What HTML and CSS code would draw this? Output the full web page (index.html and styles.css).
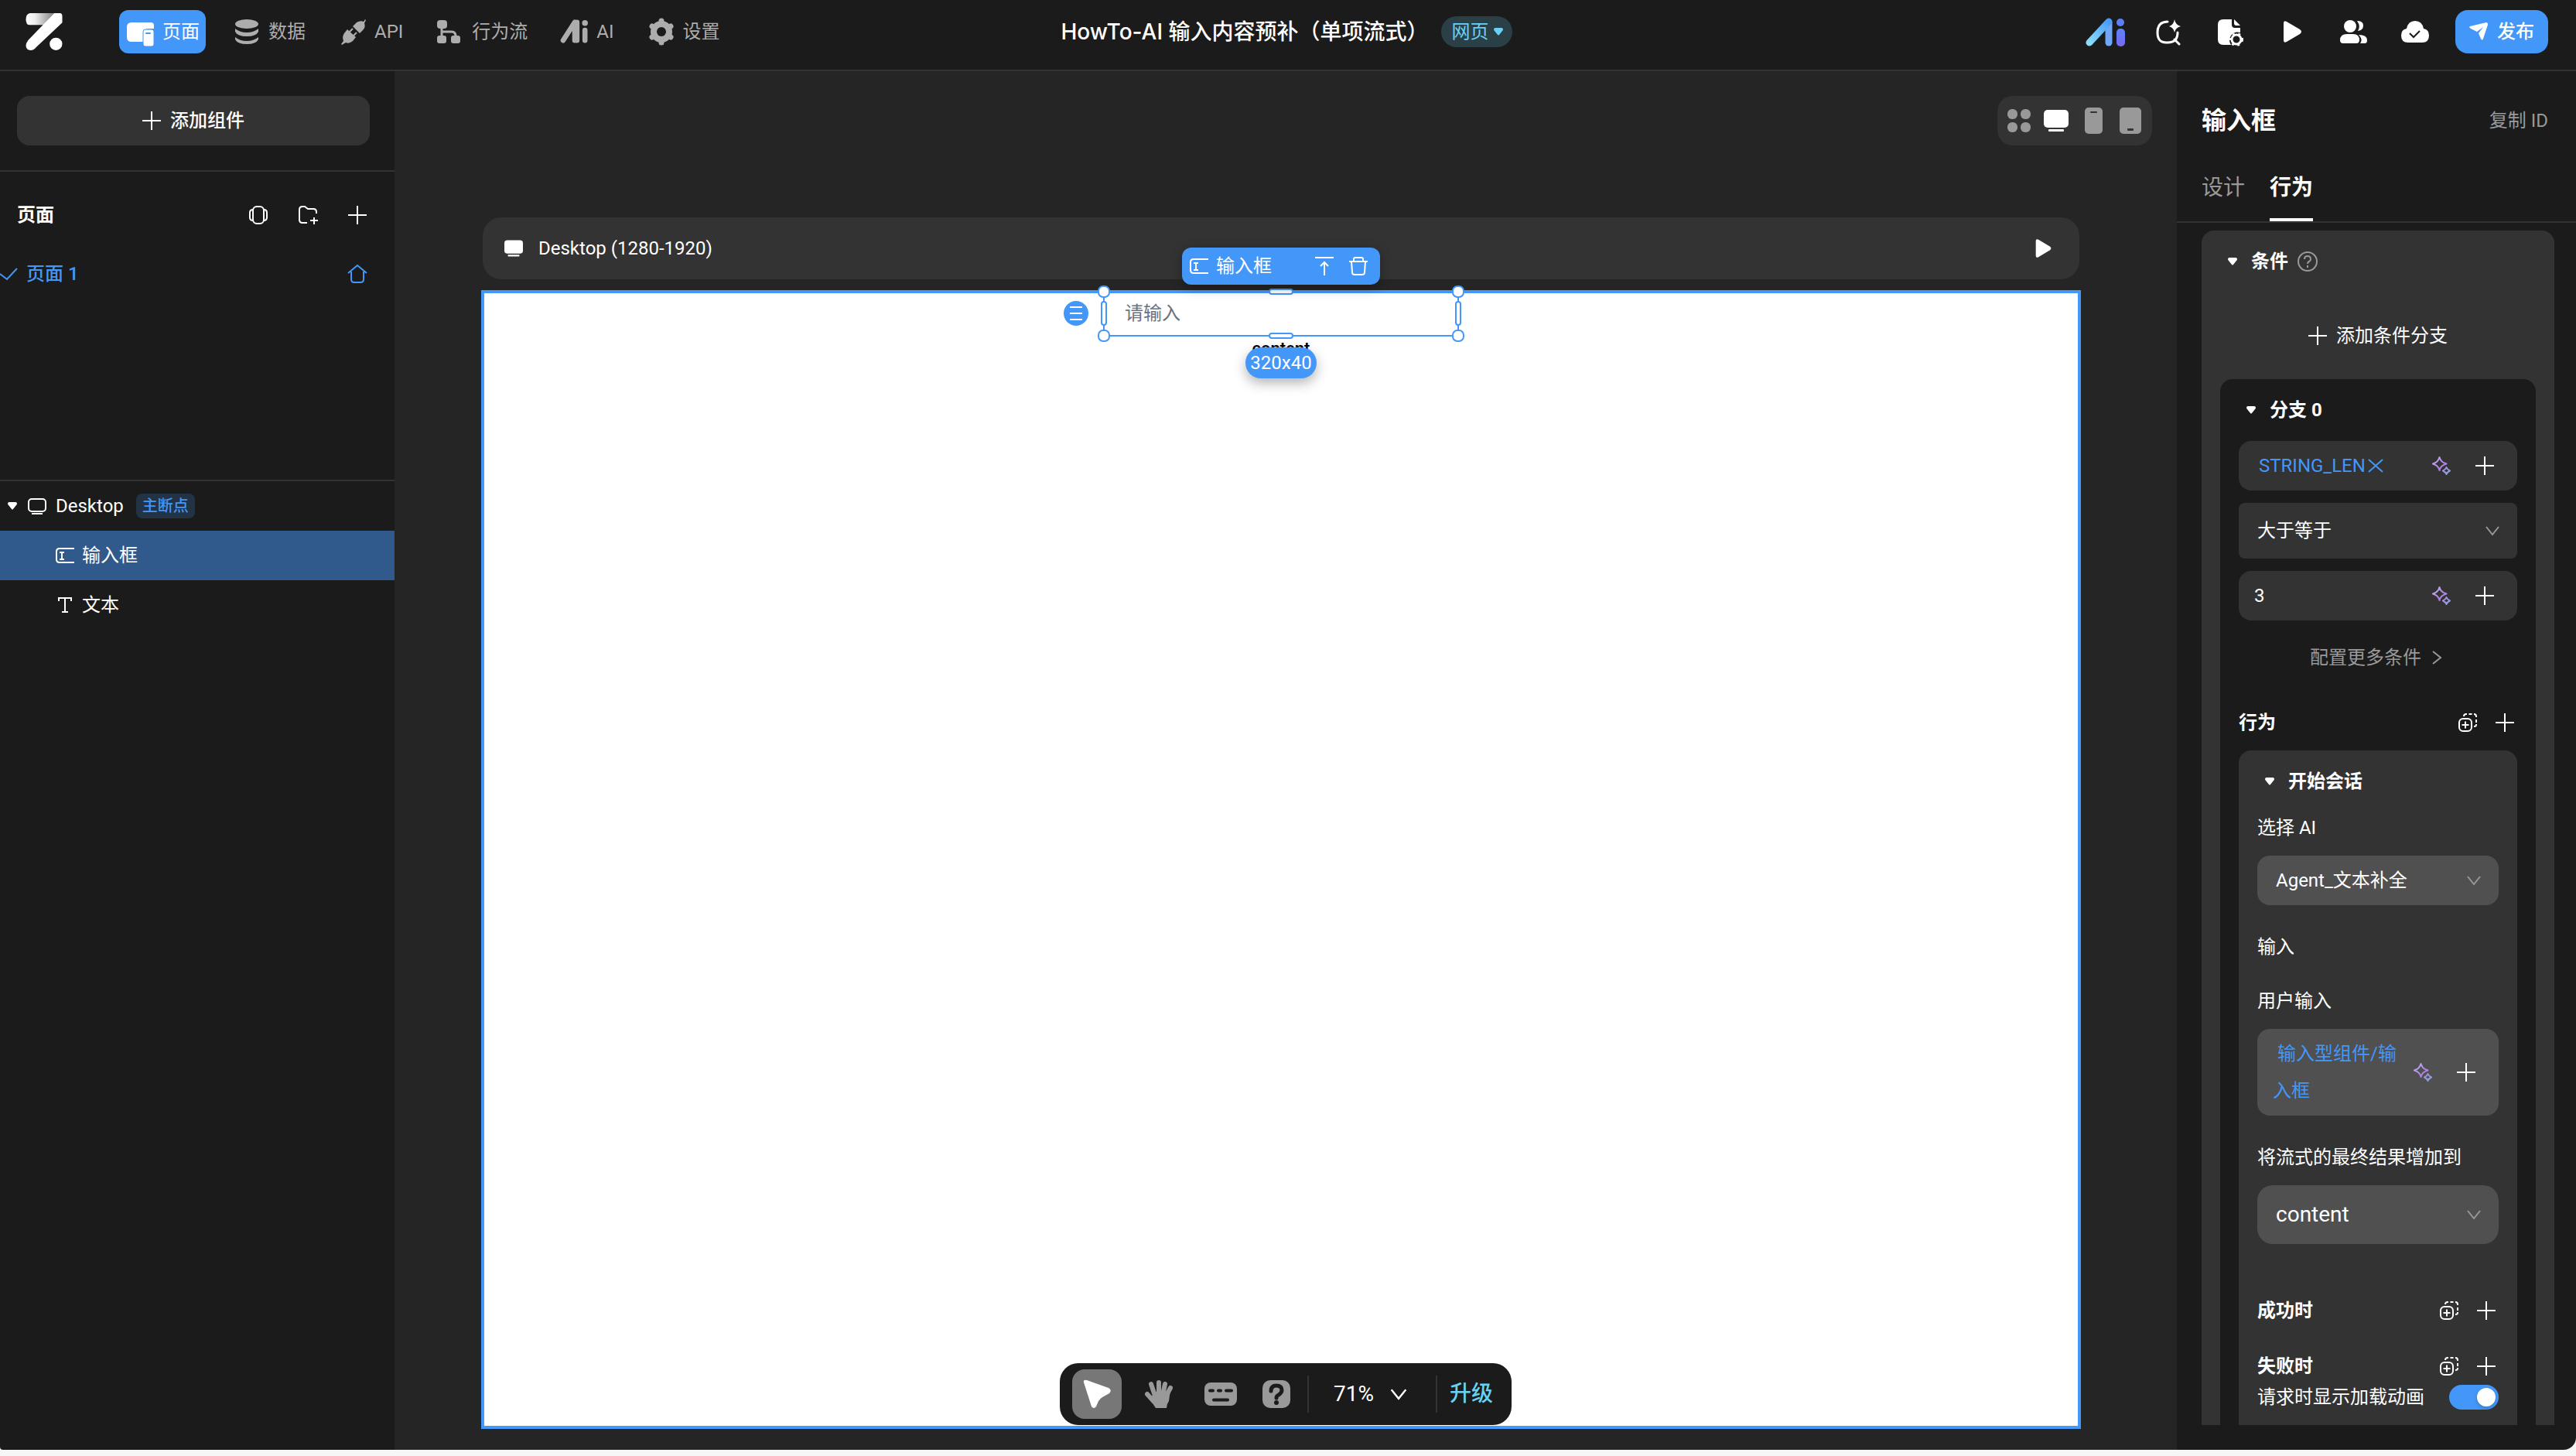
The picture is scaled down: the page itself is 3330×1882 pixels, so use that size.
FILE: index.html
```html
<!DOCTYPE html>
<html lang="zh-CN">
  <head>
    <meta charset="UTF-8" />
    <meta name="viewport" content="width=device-width, initial-scale=1.0" />
    <title>HowTo-AI 输入内容预补（单项流式）</title>
    <link rel="stylesheet" href="styles.css">
  </head>
  <body>
    <!-- Shared icons -->
    <svg class="sprite" aria-hidden="true">
      <defs>
        <linearGradient id="logo-fold" x1="0" x2="1">
          <stop offset="0" stop-color="#fff" />
          <stop offset="0.3" stop-color="#eee" />
          <stop offset="1" stop-color="#777" />
        </linearGradient>
        <linearGradient id="ai-left" x1="0" y1="1" x2="1" y2="0">
          <stop offset="0" stop-color="#8adcf8" />
          <stop offset="1" stop-color="#4a9cf8" />
        </linearGradient>
        <linearGradient id="ai-right" x1="0" y1="0" x2="0" y2="1">
          <stop offset="0" stop-color="#5b83fa" />
          <stop offset="1" stop-color="#7a68f0" />
        </linearGradient>
        <linearGradient id="spark" x1="0" y1="0" x2="1" y2="1">
          <stop offset="0" stop-color="#bfb4f2" />
          <stop offset="0.5" stop-color="#b07fe0" />
          <stop offset="1" stop-color="#86a4f0" />
        </linearGradient>
      </defs>
      <symbol id="plus" viewBox="0 0 24 24">
        <path d="M12 0v24M0 12h24" stroke="currentColor" stroke-width="2" />
      </symbol>
      <symbol id="caret" viewBox="0 0 12 10">
        <path d="M2 0h8q2 0 2 2 0 1-1 2L7 9q-1 1-2 0L1 4Q0 3 0 2 0 0 2 0z" fill="currentColor" />
      </symbol>
      <symbol id="chevron" viewBox="0 0 24 24">
        <path d="M4 7l8 10 8-10" fill="none" stroke="currentColor" stroke-width="2" />
      </symbol>
      <symbol id="sparkle" viewBox="0 0 24 24">
        <path d="M9.500 1Q11 7.500 18.500 9.500 11 11.500 9.500 18 8 11.500 1 9.500 8 7.500 9.500 1zM18.500 14Q19.500 17 23 18.500 19.500 20 18.500 23 17.500 20 14 18.500 17.500 17 18.500 14z" fill="none" stroke="url(#spark)" stroke-width="2" stroke-linejoin="round" />
      </symbol>
      <symbol id="paste-add" viewBox="0 0 24 24">
        <g fill="none" stroke="currentColor" stroke-width="2">
          <rect x="1" y="7" width="16" height="16" rx="5" />
          <path d="M9 10.500v9M4.500 15h9" />
          <path d="M7 4Q7 1 10 1h1M13.500 1h4M20 1q3 0 3 3v1M23 8v4M23 14v1q0 2-3 2" />
        </g>
      </symbol>
      <symbol id="play" viewBox="0 0 24 28">
        <path d="M0 3Q0-1 4 1l17 10q4 3 0 6L4 27q-4 2-4-2z" fill="currentColor" />
      </symbol>
      <symbol id="monitor" viewBox="0 0 32 28">
        <rect width="32" height="23" rx="5" fill="currentColor" />
        <rect x="6" y="25" width="20" height="3" rx="1" fill="currentColor" />
      </symbol>
      <symbol id="input-icon" viewBox="0 0 24 24">
        <path d="M24 3H5Q1 3 1 7v10q0 4 4 4h19M5 8h6M8 8v9M5 17h6" fill="none" stroke="currentColor" stroke-width="2" />
      </symbol>
      <symbol id="ai-mono" viewBox="0 0 40 34">
        <path d="M4 29L20 4v25" fill="none" stroke="currentColor" stroke-width="7" stroke-linecap="round" stroke-linejoin="round" />
        <path d="M23 4v25M34 15v14" stroke="currentColor" stroke-width="7" stroke-linecap="round" />
        <circle cx="34" cy="5" r="4" fill="currentColor" />
      </symbol>
    </svg>

    <div class="app">
      <header class="topbar">
        <div class="topbar-left">
          <svg class="logo" viewBox="0 0 46 47">
            <path d="M5 0h33L23 15H5Q0 15 0 8T5 0z" fill="url(#logo-fold)" />
            <path d="M36 0h7q3 0 3 4v8L13 43q-3 4-7 4-6 0-6-6 0-3 3-7z" fill="#fff" />
            <circle cx="38" cy="39" r="8" fill="#fff" />
          </svg>
          <nav class="main-nav">
            <button class="nav-item active">
              <svg viewBox="0 0 40 40">
                <path d="M8 8h25q4 0 4 4v4h-7q-6 0-6 6v11H8q-6 0-6-6V14q0-6 6-6z" fill="#fff" />
                <rect x="23" y="17" width="14" height="22" rx="3" fill="#fff" stroke="#4397f8" />
                <rect x="26" y="21" width="7" height="2" rx="1" fill="#4397f8" />
              </svg>
              <span>页面</span>
            </button>
            <button class="nav-item">
              <svg viewBox="0 0 40 40" fill="currentColor">
                <ellipse cx="20" cy="10" rx="15" ry="6" />
                <path d="M5 16q6 5 15 5t15-5v4q-3 6-15 6T5 20zM5 27q6 5 15 5t15-5v3q-3 6-15 6T5 30z" />
              </svg>
              <span>数据</span>
            </button>
            <button class="nav-item">
              <svg viewBox="0 0 40 40" fill="currentColor">
                <path d="M20 13l5-5q5-3 9-1l2-3 1 1-2 4q2 5-2 9l-4 4z" />
                <path d="M13 17l11 10-4 5q-5 4-9 2l-5 3-1-1 3-4q-2-6 1-10z" />
                <path d="M15 21l5-5M20 26l5-5" stroke="currentColor" stroke-width="2" />
              </svg>
              <span>API</span>
            </button>
            <button class="nav-item">
              <svg viewBox="0 0 40 40" fill="currentColor">
                <rect x="3" y="5" width="13" height="11" rx="4" />
                <rect x="3" y="25" width="12" height="10" rx="3" />
                <rect x="21" y="25" width="12" height="10" rx="3" />
                <path d="M9 15v11M9 20h13q5 0 5 6" fill="none" stroke="currentColor" stroke-width="3" />
              </svg>
              <span>行为流</span>
            </button>
            <button class="nav-item">
              <svg class="ai-small" viewBox="0 0 40 34"><use href="#ai-mono" /></svg>
              <span>AI</span>
            </button>
            <button class="nav-item">
              <svg viewBox="0 0 40 40">
                <circle cx="20" cy="20" r="10" fill="none" stroke="currentColor" stroke-width="8" />
                <path d="M20 6v6M20 28v6M8 13l5 3M27 24l5 3M8 27l5-3M27 16l5-3" stroke="currentColor" stroke-width="7" stroke-linecap="round" />
                <circle cx="20" cy="20" r="6" fill="#1b1b1b" />
              </svg>
              <span>设置</span>
            </button>
          </nav>
        </div>

        <div class="project">
          <h1>HowTo-AI 输入内容预补（单项流式）</h1>
          <button class="platform">网页 <svg><use href="#caret" /></svg></button>
        </div>

        <div class="topbar-right">
          <button class="icon-btn" aria-label="AI">
            <svg viewBox="0 0 40 40">
              <path d="M24 8v26" stroke="#6fa6f5" stroke-width="9" stroke-linecap="round" />
              <path d="M-1 34L24 7" stroke="url(#ai-left)" stroke-width="9" stroke-linecap="round" />
              <rect x="34" y="16" width="11" height="23" rx="5" fill="url(#ai-right)" />
              <circle cx="39" cy="8" r="5" fill="#5f7ffa" />
            </svg>
          </button>
          <button class="icon-btn" aria-label="搜索">
            <svg viewBox="0 0 40 40">
              <path d="M20 7Q7 7 7 21t13 13q13 0 13-13M29 30l6 6" fill="none" stroke="#fff" stroke-width="3" stroke-linecap="round" />
              <path d="M29 4q1 7 8 9-7 2-8 8-1-6-7-8 6-2 7-9z" fill="#fff" />
            </svg>
          </button>
          <button class="icon-btn" aria-label="页面配置">
            <svg viewBox="0 0 40 40">
              <path d="M12 4h11v7q0 4 4 4h7v6q-8-2-12 4-4 6 0 12H12q-7 0-7-7V11q0-7 7-7z" fill="#fff" />
              <path d="M26 4l8 8h-5q-3 0-3-3z" fill="#fff" />
              <circle cx="29" cy="30" r="6" fill="none" stroke="#fff" stroke-width="3" />
              <circle cx="29" cy="30" r="8" fill="none" stroke="#fff" stroke-width="2" stroke-dasharray="3 5" />
            </svg>
          </button>
          <button class="icon-btn" aria-label="预览">
            <svg class="play-big" viewBox="0 0 24 28"><use href="#play" /></svg>
          </button>
          <button class="icon-btn" aria-label="成员">
            <svg viewBox="0 0 40 40" fill="#fff">
              <circle cx="16" cy="13" r="8" />
              <path d="M25 6q8 0 8 6t-7 7q4-6-1-13z" />
              <path d="M12 23h8q8 0 8 8 0 4-4 4H7q-4 0-4-4 0-8 9-8zM27 24q11 0 11 7 0 4-3 4h-6q4-5-2-11z" />
            </svg>
          </button>
          <button class="icon-btn" aria-label="已保存">
            <svg viewBox="0 0 40 40">
              <path d="M11 34q-9 0-9-9 0-8 7-9Q11 6 20 6t11 10q7 1 7 9 0 9-9 9z" fill="#fff" />
              <path d="M13 22l5 5 8-8" fill="none" stroke="#1b1b1b" stroke-width="2" />
            </svg>
          </button>
          <button class="publish">
            <svg viewBox="0 0 24 24">
              <path d="M22 0q2 0 2 3l-6 18q-1 3-3 0l-3-7 6-8-8 6-8-4Q-1 6 1 5z" fill="#fff" />
            </svg>
            <span>发布</span>
          </button>
        </div>
      </header>

      <aside class="sidebar">
        <div class="add-box">
          <button class="add-component"><svg><use href="#plus" /></svg>添加组件</button>
        </div>
        <section class="pages">
          <div class="pages-head">
            <h2>页面</h2>
            <button aria-label="弹窗">
              <svg viewBox="0 0 24 24" fill="none" stroke="currentColor" stroke-width="2">
                <rect x="5" y="1" width="14" height="22" rx="5" />
                <path d="M5 5Q1 5 1 9v6q0 4 4 4M19 5q4 0 4 4v6q0 4-4 4" />
              </svg>
            </button>
            <button aria-label="新建文件夹">
              <svg viewBox="0 0 24 24" fill="none" stroke="currentColor" stroke-width="2">
                <path d="M11 22H5q-4 0-4-4V5q0-4 4-4h3l4 3h7q4 0 4 4v2M20 15v9M15 19h10" />
              </svg>
            </button>
            <button aria-label="新建页面"><svg><use href="#plus" /></svg></button>
          </div>
          <a class="page-item" href="#">
            <svg class="page-check" viewBox="0 0 24 24"><path d="M0 12l9 7L22 5" /></svg>
            <span>页面 1</span>
            <svg class="page-home" viewBox="0 0 24 24"><path d="M0 11L12 1l12 10M4 9v10q0 4 4 4h8q4 0 4-4V9" /></svg>
          </a>
        </section>
        <section class="tree">
          <div class="tree-row">
            <svg class="caret"><use href="#caret" /></svg>
            <svg class="tree-screen" viewBox="0 0 24 24" fill="none" stroke="currentColor" stroke-width="2">
              <rect x="1" y="3" width="22" height="16" rx="4" />
              <path d="M5 22h14" />
            </svg>
            <span>Desktop</span>
            <span class="tag">主断点</span>
          </div>
          <div class="tree-row child selected">
            <svg><use href="#input-icon" /></svg>
            <span>输入框</span>
          </div>
          <div class="tree-row child">
            <svg viewBox="0 0 24 24" fill="none" stroke="currentColor" stroke-width="2">
              <path d="M4 7V3h16v4M12 3v18M8 21h8" />
            </svg>
            <span>文本</span>
          </div>
        </section>
      </aside>

      <main class="workspace">
        <div class="devices">
          <button aria-label="全部">
            <svg viewBox="0 0 32 32" fill="currentColor">
              <rect x="1" y="1" width="13" height="13" rx="6" /><rect x="18" y="1" width="13" height="13" rx="6" />
              <rect x="1" y="18" width="13" height="13" rx="6" /><rect x="18" y="18" width="13" height="13" rx="6" />
            </svg>
          </button>
          <button class="active" aria-label="桌面"><svg><use href="#monitor" /></svg></button>
          <button aria-label="手机">
            <svg viewBox="0 0 32 34">
              <rect x="5" width="23" height="34" rx="5" fill="currentColor" />
              <rect x="12" y="5" width="9" height="2" rx="1" fill="#333" />
            </svg>
          </button>
          <button aria-label="平板">
            <svg viewBox="0 0 32 34">
              <rect x="2" width="28" height="34" rx="5" fill="currentColor" />
              <rect x="12" y="27" width="8" height="3" rx="1" fill="#333" />
            </svg>
          </button>
        </div>

        <div class="frame-head">
          <svg><use href="#monitor" /></svg>
          <span>Desktop (1280-1920)</span>
          <button aria-label="运行"><svg><use href="#play" /></svg></button>
        </div>

        <div class="frame">
          <div class="widget">
            <input type="text" placeholder="请输入" aria-label="输入框" />
            <i class="corner top left"></i>
            <i class="corner top right"></i>
            <i class="corner bottom left"></i>
            <i class="corner bottom right"></i>
            <i class="edge top"></i>
            <i class="edge bottom"></i>
            <i class="side left"></i>
            <i class="side right"></i>
            <button class="drag" aria-label="菜单">
              <svg viewBox="0 0 16 18"><path d="M0 1h16M0 9h16M0 17h16" stroke="#fff" stroke-width="2" /></svg>
            </button>
            <div class="widget-bar">
              <svg><use href="#input-icon" /></svg>
              <span>输入框</span>
              <button aria-label="上移">
                <svg viewBox="0 0 24 24" fill="none" stroke="#fff" stroke-width="2"><path d="M0 1h24M12 24V7M7 12l5-5 5 5" /></svg>
              </button>
              <button aria-label="删除">
                <svg viewBox="0 0 24 24" fill="none" stroke="#fff" stroke-width="2">
                  <path d="M0 6h24M3 6l1 14q0 3 3 3h10q3 0 3-3l1-14M6 6V3q0-2 2-2h8q2 0 2 2v3" />
                </svg>
              </button>
            </div>
            <div class="widget-size">320x40</div>
          </div>
          <p class="frame-text">content</p>
        </div>

        <div class="tools">
          <button class="tool active" aria-label="选择">
            <svg viewBox="0 0 36 36"><path d="M1 3Q0-1 5 0l28 10q5 3 1 7l-9 5q-3 2-5 5l-3 7q-3 4-6 0z" fill="#fff" /></svg>
          </button>
          <button class="tool" aria-label="拖动">
            <svg viewBox="0 0 36 36">
              <path d="M11 27L3 18M13 20L8 5M18 19V3M23 19l3-14M26 23l7-13" stroke="currentColor" stroke-width="6" stroke-linecap="round" />
              <path d="M2 19l8 11 4 6h14q0-5 3-9l2-14-9 2H12l-3 6z" fill="currentColor" />
            </svg>
          </button>
          <button class="tool" aria-label="快捷键">
            <svg class="keyboard" viewBox="0 0 42 30">
              <rect width="42" height="30" rx="8" fill="currentColor" />
              <path d="M7 10.500h4M18 10.500h3M28 10.500h7M12 22.500h18" stroke="#1b1b1b" stroke-width="4" stroke-linecap="round" />
            </svg>
          </button>
          <button class="tool narrow" aria-label="帮助">
            <svg viewBox="0 0 36 36">
              <rect width="36" height="36" rx="10" fill="currentColor" />
              <path d="M11 14Q11 7 18 7t7 6q0 3-4 6-3 1-3 4" fill="none" stroke="#1b1b1b" stroke-width="5" stroke-linecap="round" />
              <circle cx="18" cy="29" r="3" fill="#1b1b1b" />
            </svg>
          </button>
          <button class="zoom">71% <svg><use href="#chevron" /></svg></button>
          <button class="upgrade">升级</button>
        </div>
      </main>

      <aside class="inspector">
        <div class="inspector-head">
          <h2>输入框</h2>
          <button>复制 ID</button>
        </div>
        <div class="tabs">
          <button>设计</button>
          <button class="active">行为</button>
        </div>

        <div class="inspector-body">
          <section class="card">
            <div class="card-head">
              <svg class="caret"><use href="#caret" /></svg>
              <h3>条件</h3>
              <svg class="help" viewBox="0 0 26 26" fill="none" stroke="currentColor" stroke-width="2">
                <circle cx="13" cy="13" r="12" />
                <path d="M9 10q0-4 4-4t4 4q0 2-2 3-2 1-2 3M13 18v3" />
              </svg>
            </div>
            <button class="add-branch"><svg><use href="#plus" /></svg>添加条件分支</button>

            <section class="branch">
              <div class="card-head">
                <svg class="caret"><use href="#caret" /></svg>
                <h3>分支 0</h3>
              </div>
              <div class="fields">
                <div class="field">
                  <div class="expr">
                    <span>STRING_LEN</span><svg viewBox="0 0 18 18"><path d="M0 1l18 16M18 1L0 17" /></svg>
                  </div>
                  <button aria-label="AI 生成"><svg><use href="#sparkle" /></svg></button>
                  <button aria-label="添加"><svg><use href="#plus" /></svg></button>
                </div>
                <div class="select operator">
                  <select aria-label="运算符">
                    <option>大于等于</option>
                  </select>
                  <svg><use href="#chevron" /></svg>
                </div>
                <div class="field">
                  <input type="text" value="3" aria-label="比较值" />
                  <button aria-label="AI 生成"><svg><use href="#sparkle" /></svg></button>
                  <button aria-label="添加"><svg><use href="#plus" /></svg></button>
                </div>
              </div>
              <button class="more">配置更多条件 <svg><use href="#chevron" /></svg></button>

              <div class="row actions-head">
                <h3>行为</h3>
                <button aria-label="粘贴"><svg><use href="#paste-add" /></svg></button>
                <button aria-label="添加"><svg><use href="#plus" /></svg></button>
              </div>

              <section class="action">
                <div class="card-head">
                  <svg class="caret"><use href="#caret" /></svg>
                  <h3>开始会话</h3>
                </div>
                <label class="label first" for="agent">选择 AI</label>
                <div class="select">
                  <select id="agent">
                    <option>Agent_文本补全</option>
                  </select>
                  <svg><use href="#chevron" /></svg>
                </div>
                <p class="label">输入</p>
                <p class="label">用户输入</p>
                <div class="field tall">
                  <div class="expr">输入型组件/输入框</div>
                  <button aria-label="AI 生成"><svg><use href="#sparkle" /></svg></button>
                  <button aria-label="添加"><svg><use href="#plus" /></svg></button>
                </div>
                <label class="label" for="target">将流式的最终结果增加到</label>
                <div class="select large">
                  <select id="target">
                    <option>content</option>
                  </select>
                  <svg><use href="#chevron" /></svg>
                </div>
                <div class="row on-success">
                  <h3>成功时</h3>
                  <button aria-label="粘贴"><svg><use href="#paste-add" /></svg></button>
                  <button aria-label="添加"><svg><use href="#plus" /></svg></button>
                </div>
                <div class="row on-failure">
                  <h3>失败时</h3>
                  <button aria-label="粘贴"><svg><use href="#paste-add" /></svg></button>
                  <button aria-label="添加"><svg><use href="#plus" /></svg></button>
                </div>
                <div class="toggle-row">
                  <label for="loading">请求时显示加载动画</label>
                  <input type="checkbox" id="loading" checked />
                </div>
              </section>
            </section>
          </section>
        </div>
      </aside>
    </div>
  </body>
</html>
```
FILE: styles.css
```css
* {
  box-sizing: border-box;
}
body {
  margin: 0;
  height: 100vh;
  padding-bottom: 8px;
  background-color: #f6f6f6;
  color: #fff;
  font-family: Roboto, "Noto Sans CJK SC", sans-serif;
  font-size: 24px;
  line-height: 32px;
}
h1,
h2,
h3,
p {
  margin: 0;
}
h2,
h3 {
  font-size: 24px;
  font-weight: 700;
}
button {
  display: flex;
  align-items: center;
  justify-content: center;
  padding: 0;
  border: none;
  background: none;
  color: inherit;
  font: inherit;
  cursor: pointer;
}
input,
select {
  color: inherit;
  font: inherit;
}
svg {
  display: block;
  flex: none;
  width: 24px;
  height: 24px;
  overflow: visible;
}
.sprite {
  position: absolute;
  width: 0;
  height: 0;
}
.caret {
  width: 12px;
  height: 10px;
}

/* Page grid */
.app {
  display: grid;
  grid-template-columns: 510px minmax(0, 1fr) 516px;
  grid-template-rows: 92px minmax(0, 1fr);
  height: 100%;
  border-radius: 0 0 16px 4px;
  overflow: hidden;
  background-color: #1b1b1b;
}

/* Top bar */
.topbar {
  grid-column: 1 / -1;
  display: grid;
  grid-template-columns: 1fr auto 1fr;
  padding: 12px 36px 20px 32px;
  border-bottom: 2px solid #333;
}
.topbar-left,
.topbar-right,
.project,
.main-nav {
  display: flex;
  align-items: center;
}
.logo {
  width: 50px;
  height: 48px;
  margin-right: 72px;
}
.main-nav {
  gap: 25px;
}
.nav-item {
  gap: 8px;
  height: 56px;
  padding: 0 8px;
  border-radius: 12px;
  color: #adadad;
}
.nav-item svg {
  width: 40px;
  height: 40px;
}
.nav-item .ai-small {
  height: 32px;
}
.nav-item.active {
  background-color: #4397f8;
  color: #fff;
}
.project {
  gap: 16px;
}
.project h1 {
  font-family: Inter, "Noto Sans CJK SC", sans-serif;
  font-size: 28px;
  font-weight: 500;
}
.platform {
  gap: 6px;
  height: 40px;
  padding: 0 12px 0 14px;
  border-radius: 20px;
  background-color: #2b3f47;
  color: #68d1f4;
}
.platform svg {
  width: 12px;
  height: 10px;
}
.topbar-right {
  justify-content: flex-end;
  gap: 40px;
}
.icon-btn,
.icon-btn svg {
  width: 40px;
  height: 40px;
}
.icon-btn .play-big {
  width: 24px;
  height: 28px;
  margin-left: 4px;
}
.publish {
  gap: 12px;
  width: 120px;
  height: 56px;
  margin-left: -8px;
  border-radius: 16px;
  background-color: #4397f8;
  font-weight: 500;
}

/* Left sidebar */
.add-box {
  padding: 32px 32px 32px 22px;
  border-bottom: 2px solid #333;
}
.add-component {
  gap: 12px;
  width: 100%;
  height: 64px;
  border-radius: 16px;
  background-color: #333;
  font-weight: 500;
}
.pages {
  height: 400px;
  padding: 40px 36px 0 22px;
  border-bottom: 2px solid #333;
}
.pages-head {
  display: flex;
  align-items: center;
  gap: 40px;
}
.pages-head h2 {
  flex: 1;
}
.page-item {
  display: flex;
  align-items: center;
  margin: 44px 0 0 -22px;
  color: #4397f8;
  font-weight: 500;
  text-decoration: none;
}
.page-item span {
  flex: 1;
  margin-left: 10px;
}
.page-item svg {
  fill: none;
  stroke: currentColor;
  stroke-width: 2;
}
.tree-row {
  display: flex;
  align-items: center;
  gap: 12px;
  height: 64px;
  padding-left: 10px;
}
.tree-screen {
  margin-left: 2px;
}
.tree-row.child {
  gap: 10px;
  padding-left: 72px;
}
.tree-row.selected {
  background-color: #2f5a8b;
}
.tag {
  margin-left: 4px;
  padding: 0 8px;
  border-radius: 8px;
  background-color: #223346;
  color: #4397f8;
  font-size: 20px;
  font-weight: 500;
}

/* Canvas */
.workspace {
  position: relative;
  display: flex;
  flex-direction: column;
  padding: 32px 32px 27px 112px;
  background-color: #252525;
}
.devices {
  display: flex;
  align-self: flex-end;
  align-items: center;
  height: 64px;
  padding: 0 4px;
  border-radius: 20px;
  background-color: #333;
  color: #999;
}
.devices button {
  width: 48px;
  height: 48px;
}
.devices svg {
  width: 32px;
  height: 34px;
}
.devices .active {
  color: #fff;
}
.frame-head {
  display: flex;
  align-items: center;
  gap: 20px;
  height: 80px;
  margin: 93px 94px 0 2px;
  padding: 0 34px 0 28px;
  border-radius: 24px;
  background-color: #333;
}
.frame-head span {
  flex: 1;
}
.frame {
  flex: 1;
  margin: 14px 92px 0 0;
  border: 4px solid #4397f8;
  background-color: #fff;
}
.widget {
  position: relative;
  width: 460px;
  height: 56px;
  margin: 0 auto;
  border: 2px solid #4397f8;
  border-top: none;
}
.widget input {
  width: 100%;
  height: 52px;
  padding: 0 26px;
  border: none;
  background: none;
  outline: none;
}
.widget input::placeholder {
  color: #6b7280;
}
.frame-text {
  color: #000;
  font-size: 22px;
  font-weight: 500;
  line-height: 32px;
  text-align: center;
}

/* Resize handles round the selected widget */
.corner,
.edge,
.side {
  position: absolute;
  border: 2px solid #4397f8;
  background-color: #fff;
}
.corner {
  width: 16px;
  height: 16px;
  border-radius: 7px;
}
.corner.top {
  top: -10px;
}
.corner.bottom {
  bottom: -9px;
}
.corner.left {
  left: -9px;
}
.corner.right {
  right: -9px;
}
.edge {
  left: 50%;
  width: 32px;
  height: 8px;
  margin-left: -16px;
  border-radius: 4px;
}
.edge.top {
  top: -6px;
}
.edge.bottom {
  bottom: -5px;
}
.side {
  top: 10px;
  width: 8px;
  height: 32px;
  border-radius: 4px;
}
.side.left {
  left: -5px;
}
.side.right {
  right: -5px;
}
.drag {
  position: absolute;
  top: 10px;
  left: -53px;
  width: 32px;
  height: 32px;
  border-radius: 50%;
  background-color: #4397f8;
}
.drag svg {
  width: 16px;
  height: 18px;
}
.widget-bar {
  position: absolute;
  top: -59px;
  left: 50%;
  display: flex;
  align-items: center;
  gap: 10px;
  width: 256px;
  height: 48px;
  margin-left: -128px;
  padding: 0 16px 0 10px;
  border-radius: 12px;
  background-color: #4397f8;
  box-shadow: 0 4px 16px rgba(0, 0, 0, 0.3);
}
.widget-bar span {
  flex: 1;
}
.widget-bar button + button {
  margin-left: 10px;
}
.widget-size {
  position: absolute;
  top: 70px;
  left: 50%;
  width: 92px;
  height: 40px;
  margin-left: -46px;
  border-radius: 20px;
  background-color: #4397f8;
  box-shadow: 0 6px 16px rgba(0, 0, 0, 0.3);
  line-height: 40px;
  text-align: center;
}

/* Floating toolbar */
.tools {
  position: absolute;
  bottom: 32px;
  left: 50%;
  display: flex;
  align-items: center;
  gap: 16px;
  height: 80px;
  padding: 0 24px 0 16px;
  border-radius: 24px;
  background-color: #1b1b1b;
  color: #999;
  font-size: 28px;
  transform: translateX(-50%);
}
.tool {
  width: 64px;
  height: 64px;
  border-radius: 16px;
}
.tool.active {
  background-color: #777;
}
.tool.narrow {
  width: 48px;
}
.tool svg {
  width: 36px;
  height: 36px;
}
.tool .keyboard {
  width: 42px;
  height: 30px;
}
.zoom,
.upgrade {
  height: 48px;
  border-left: 2px solid #333;
}
.zoom {
  gap: 18px;
  padding: 0 18px 0 32px;
  color: #fff;
}
.zoom svg {
  width: 28px;
  height: 28px;
}
.upgrade {
  padding-left: 16px;
  color: #68d1f4;
  font-weight: 500;
}

/* Right inspector */
.inspector {
  display: flex;
  flex-direction: column;
  padding-bottom: 32px;
}
.inspector-head {
  display: flex;
  align-items: center;
  justify-content: space-between;
  height: 128px;
  padding: 0 36px 0 32px;
}
.inspector-head h2 {
  font-size: 32px;
}
.inspector-head button {
  color: #999;
}
.tabs {
  display: flex;
  gap: 32px;
  padding-left: 32px;
  border-bottom: 2px solid #333;
  font-size: 28px;
}
.tabs button {
  height: 66px;
  padding-bottom: 16px;
  border-bottom: 4px solid transparent;
  color: #999;
}
.tabs .active {
  border-bottom-color: #fff;
  color: #fff;
  font-weight: 700;
}
.inspector-body {
  flex: 1;
  min-height: 0;
  margin-top: 10px;
  padding: 0 28px 0 32px;
  overflow: hidden;
}
.card,
.branch,
.action {
  padding: 0 24px;
  border-radius: 16px 16px 0 0;
}
.card,
.action {
  background-color: #333;
}
.branch {
  background-color: #1b1b1b;
}
.card-head {
  display: flex;
  align-items: center;
  height: 80px;
  padding-left: 10px;
}
.card-head h3 {
  margin-left: 18px;
}
.help {
  width: 26px;
  height: 26px;
  margin-left: 12px;
  color: #999;
}
.add-branch {
  gap: 12px;
  width: 100%;
  height: 112px;
}
.fields {
  display: grid;
  grid-template-columns: minmax(0, 1fr);
  gap: 16px;
}
.field {
  display: flex;
  align-items: center;
  gap: 32px;
  min-height: 64px;
  padding: 0 30px 0 20px;
  border-radius: 16px;
  background-color: #333;
}
.field input {
  flex: 1;
  min-width: 0;
  padding: 0;
  border: none;
  background: none;
  outline: none;
}
.expr {
  display: flex;
  flex: 1;
  align-items: center;
  gap: 4px;
  padding-left: 6px;
  color: #4397f8;
}
.expr svg {
  width: 18px;
  height: 18px;
  stroke: currentColor;
  stroke-width: 2;
}
.field.tall {
  padding-top: 8px;
  padding-bottom: 8px;
  background-color: #505050;
}
.tall .expr {
  display: block;
  margin-right: -16px;
  padding-left: 0;
  line-height: 48px;
  text-indent: 6px;
}
.select {
  position: relative;
}
.select select {
  display: block;
  width: 100%;
  height: 64px;
  padding: 0 24px;
  border: none;
  border-radius: 16px;
  outline: none;
  background-color: #505050;
  appearance: none;
}
.select svg {
  position: absolute;
  top: 50%;
  right: 20px;
  margin-top: -12px;
  color: #999;
  pointer-events: none;
}
.operator select {
  height: 72px;
  border-radius: 8px;
  background-color: #333;
}
.large select {
  height: 76px;
  border-radius: 20px;
  font-size: 28px;
}
.more {
  gap: 8px;
  width: 100%;
  height: 96px;
  color: #999;
}
.more svg {
  transform: rotate(-90deg);
}
.row {
  display: flex;
  align-items: center;
  gap: 24px;
  padding-right: 4px;
}
.row h3 {
  flex: 1;
}
.actions-head {
  height: 72px;
}
.on-success {
  margin-top: 70px;
}
.on-failure {
  margin: 40px 0 8px;
}
.action {
  padding-bottom: 40px;
}
.label {
  display: block;
  margin: 34px 0 16px;
  line-height: 40px;
}
.label.first {
  margin-top: 0;
}
.label + .label {
  margin-top: 30px;
}
.toggle-row {
  display: flex;
  align-items: center;
  justify-content: space-between;
}
.toggle-row input {
  width: 64px;
  height: 32px;
  margin: 0;
  padding: 4px;
  border-radius: 16px;
  background-color: #505050;
  appearance: none;
}
.toggle-row input::before {
  content: "";
  display: block;
  width: 24px;
  height: 24px;
  border-radius: 50%;
  background-color: #fff;
  box-shadow: 0 2px 4px rgba(0, 0, 0, 0.2);
}
.toggle-row input:checked {
  background-color: #4397f8;
}
.toggle-row input:checked::before {
  margin-left: auto;
}
```
